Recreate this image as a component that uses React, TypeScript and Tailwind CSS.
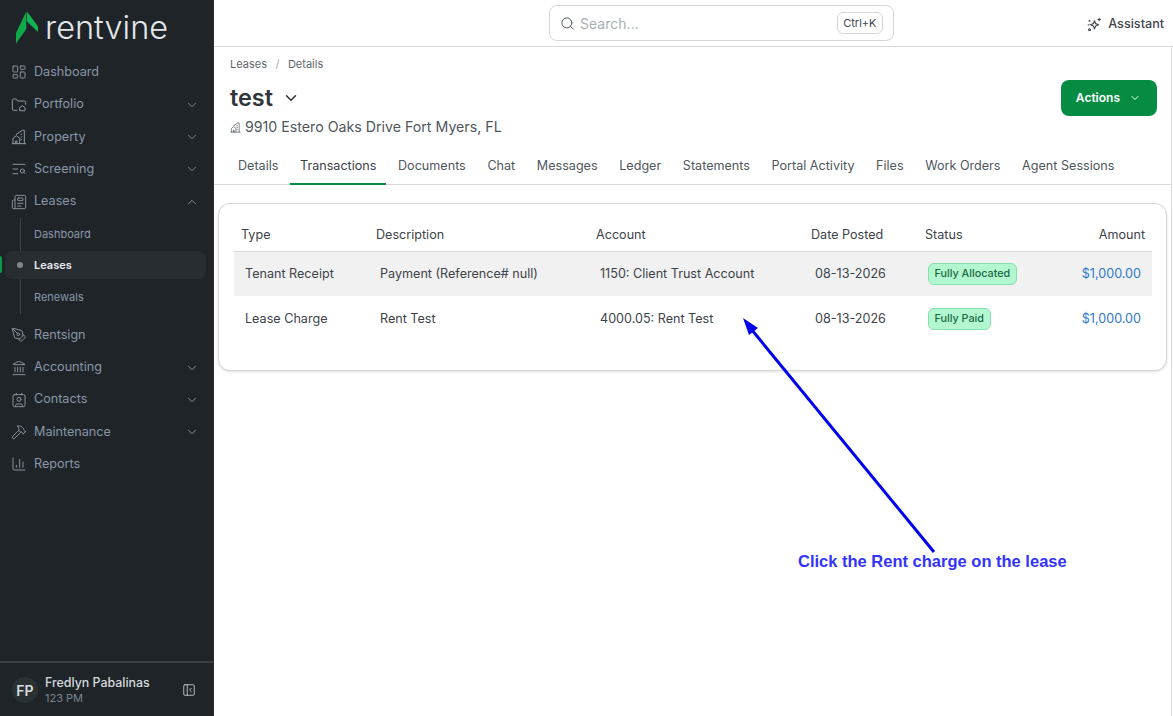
import React from "react";
import {
  ChartColumn,
  ChevronDown,
  ChevronUp,
  Contact,
  Hammer,
  Landmark,
  LayoutDashboard,
  Newspaper,
  PanelLeftClose,
  PenTool,
  Search,
  TextSearch,
} from "lucide-react";

const FolderHome = ({ className }: { className?: string }) => (
  <svg viewBox="0 0 24 24" fill="none" stroke="currentColor" strokeWidth="1.5" strokeLinecap="round" strokeLinejoin="round" className={className}>
    <path d="M9 20H4a2 2 0 0 1-2-2V5a2 2 0 0 1 2-2h4l2 3h10a2 2 0 0 1 2 2v3" />
    <path d="M13 20v-4l4-3 4 3v4z" />
  </svg>
);

const PropertyIcon = ({ className }: { className?: string }) => (
  <svg viewBox="0 0 24 24" fill="none" stroke="currentColor" strokeWidth="1.5" strokeLinecap="round" strokeLinejoin="round" className={className}>
    <path d="M2 22h20" />
    <path d="M3 22v-8l5-4 5 4v8" />
    <path d="M7 22v-4h2v4" />
    <path d="M8 8l9-6h3v20" />
    <path d="M15 8h1M15 12h1M15 16h1" />
  </svg>
);

const Sparkle = ({ className }: { className?: string }) => (
  <svg viewBox="0 0 24 24" fill="none" stroke="currentColor" strokeWidth="1.8" strokeLinecap="round" strokeLinejoin="round" className={className}>
    <path d="M12 6l1.8 4.6L18.5 12.5l-4.7 1.9L12 19l-1.8-4.6-4.7-1.9 4.7-1.9z" />
    <path d="M19.5 2v4M17.5 4h4" />
    <circle cx="4" cy="20.5" r="1.5" />
    <circle cx="4" cy="6" r="0.6" />
    <path d="M2 12.5h1" />
  </svg>
);

const navTop = [
  { label: "Dashboard", icon: LayoutDashboard },
  { label: "Portfolio", icon: FolderHome, more: true },
  { label: "Property", icon: PropertyIcon, more: true },
  { label: "Screening", icon: TextSearch, more: true },
];

const navBottom = [
  { label: "Rentsign", icon: PenTool },
  { label: "Accounting", icon: Landmark, more: true },
  { label: "Contacts", icon: Contact, more: true },
  { label: "Maintenance", icon: Hammer, more: true },
  { label: "Reports", icon: ChartColumn },
];

const tabs = ["Details", "Transactions", "Documents", "Chat", "Messages", "Ledger", "Statements", "Portal Activity", "Files", "Work Orders", "Agent Sessions"];

const rows = [
  { type: "Tenant Receipt", desc: "Payment (Reference# null)", account: "1150: Client Trust Account", status: "Fully Allocated", shade: "bg-[#f1f1f1]" },
  { type: "Lease Charge", desc: "Rent Test", account: "4000.05: Rent Test", status: "Fully Paid", shade: "pt-[2px]" },
];

const NavItem = ({ item }: { item: { label: string; icon: React.ElementType; more?: boolean } }) => {
  const Icon = item.icon;
  return (
    <div className="flex items-center h-[32.3px] pl-[11px] pr-[14px] text-[12.6px] text-[#8b96a6]">
      <Icon className="w-[16px] h-[16px] mr-[7px] shrink-0 text-[#8f98a3]" strokeWidth={1.4} />
      <span>{item.label}</span>
      {item.more && <ChevronDown className="w-[14px] h-[14px] ml-auto text-[#8f98a3]" strokeWidth={1.5} />}
    </div>
  );
};

const Sidebar = () => (
  <aside className="flex flex-col w-[214px] h-[716px] shrink-0 bg-[#1f2429] border-r border-[#2a2f34]">
    <div className="flex items-center h-[56.3px] pl-4">
      <svg viewBox="16 11 23 33" className="w-[23px] h-[33px] shrink-0 mt-[-1px]">
        <path d="M27 11.5 L38 26.5 L38 32 L27 21.5 Z" fill="#12b553" />
        <path d="M26.3 11.5 L26.3 29 L16 43.5 L16 33 Z" fill="#0ea94b" />
      </svg>
      <span className="ml-[6px] text-[32.5px] leading-none font-light text-[#e4e7ea]">rentvine</span>
    </div>
    <nav className="flex flex-col relative">
      {navTop.map((item) => (
        <NavItem key={item.label} item={item} />
      ))}
      <div className="flex items-center h-[32.3px] pl-[11px] pr-[14px] text-[12.6px] text-[#8b96a6]">
        <Newspaper className="w-[16px] h-[16px] mr-[7px] text-[#8f98a3]" strokeWidth={1.4} />
        <span>Leases</span>
        <ChevronUp className="w-[14px] h-[14px] ml-auto text-[#8f98a3]" strokeWidth={1.5} />
      </div>
      <div className="relative flex flex-col mb-[5.4px] text-[11px]">
        <div className="absolute left-[20px] top-0 bottom-0 w-px bg-[#3d4349]" />
        <div className="flex items-center h-[31.2px] pt-[2px] pl-[34px] text-[#8b96a6]">Dashboard</div>
        <div className="relative flex items-center h-[28.5px] my-[2px] ml-[5px] mr-[7px] pl-[29px] rounded-lg bg-[#282d32] font-semibold text-[#e8ebee]">
          <span className="absolute left-[-5px] top-[5px] w-[2px] h-[17px] rounded-r bg-[#0b9a45]" />
          <span className="absolute left-[12px] top-[11px] w-[6px] h-[6px] rounded-full bg-[#7e858d]" />
          Leases
        </div>
        <div className="flex items-center h-[32.3px] pl-[34px] text-[#8b96a6]">Renewals</div>
      </div>
      {navBottom.map((item) => (
        <NavItem key={item.label} item={item} />
      ))}
    </nav>
    <div className="flex items-center mt-auto h-[55px] pl-3 pr-[17px] pt-[1px] border-t-2 border-[#3a3f44]">
      <div className="flex items-center justify-center w-[26px] h-[26px] mr-[7px] rounded-full bg-[#2a3135] text-[14px] font-semibold text-[#d9dcdf]">FP</div>
      <div className="flex flex-col">
        <span className="text-[12.4px] leading-4 font-medium text-[#d5d8dc]">Fredlyn Pabalinas</span>
        <span className="text-[11px] leading-[15px] text-[#7c838b]">123 PM</span>
      </div>
      <PanelLeftClose className="w-[14px] h-[14px] ml-auto text-[#c9cdd1]" strokeWidth={1.5} />
    </div>
  </aside>
);

const Topbar = () => (
  <header className="relative flex items-center h-[47px] pl-[335px] border-b border-[#d9d9d9]">
    <div className="flex items-center w-[345px] h-[36px] pl-[10px] pr-[10px] rounded-lg border border-[#d4d6d8]">
      <Search className="w-[15px] h-[15px] mr-[5px] text-[#4b5258]" strokeWidth={1.5} />
      <span className="text-[14px] text-[#a9afb4]">Search...</span>
      <span className="ml-auto px-[5.5px] h-[22px] flex items-center rounded-md border border-[#d4d6d8] text-[11px] text-[#40464c]">Ctrl+K</span>
    </div>
    <div className="absolute right-[9px] top-[15px] flex items-center text-[12.6px] font-medium text-[#3f454b]">
      <Sparkle className="w-[15px] h-[15px] mr-[6px]" />
      Assistant
    </div>
  </header>
);

const Table = () => (
  <div className="ml-[4px] mr-[4px] mt-[18px] h-[168px] rounded-xl border border-[#d6d6d6] shadow-sm pl-[15px] pr-[14px] pt-[14px] bg-white">
    <div className="grid grid-cols-[135px_220px_215px_114px_1fr_auto] h-[34px] pt-[2px] items-center pl-[7px] pr-[7px] border-b border-[#dcdcdc] text-[12.6px] text-[#3d4349]">
      <span>Type</span>
      <span>Description</span>
      <span>Account</span>
      <span>Date Posted</span>
      <span>Status</span>
      <span>Amount</span>
    </div>
    {rows.map((row) => (
      <div key={row.type} className={`grid grid-cols-[135px_220px_215px_113px_1fr_auto] h-[44px] items-center pl-[11px] pr-[11px] text-[12.6px] text-[#3d4349] ${row.shade}`}>
        <span>{row.type}</span>
        <span>{row.desc}</span>
        <span>{row.account}</span>
        <span>08-13-2026</span>
        <span className="justify-self-start px-[5.5px] h-[22px] flex items-center rounded-md border border-[#86dfae] bg-[#b2f7d0] text-[10.8px] font-medium text-[#1c6b45]">{row.status}</span>
        <span className="text-[#2b78c9]">$1,000.00</span>
      </div>
    ))}
  </div>
);

const Main = () => (
  <main className="relative flex-1 min-w-0 h-[716px] bg-white">
    <Topbar />
    <div className="h-[669px] mr-[1px] border-r border-[#d9d9d9]">
      <section className="pl-[16px] pt-[10px] pr-[14px] flex items-start justify-between">
        <div>
          <div className="flex items-center h-[14px] text-[11px] text-[#5f666d]">
            <span>Leases</span>
            <span className="mx-[8.5px] text-[#a5a9ad]">/</span>
            <span>Details</span>
          </div>
          <div className="flex items-center h-[28px] mt-[13px] text-[23.4px] leading-none font-semibold text-[#2f353a]">
            test
            <ChevronDown className="w-[18px] h-[18px] ml-[9px]" strokeWidth={2} />
          </div>
          <div className="flex items-center h-[20px] mt-[5px] text-[14.2px] text-[#4f565c]">
            <PropertyIcon className="w-[11px] h-[11px] mr-[4px]" />
            9910 Estero Oaks Drive Fort Myers, FL
          </div>
        </div>
        <button className="flex items-center h-[36px] mt-[23px] pl-[15px] pr-[16px] rounded-lg bg-[#058c42] text-[12px] font-semibold text-white">
          Actions
          <ChevronDown className="w-[12px] h-[12px] ml-[9px]" />
        </button>
      </section>
      <div className="flex h-[36px] mt-[12px] pl-[14px] border-b border-[#d9d9d9] text-[12.6px] text-[#50575d]">
        {tabs.map((tab) => (
          <div key={tab} className={`flex items-center px-[10px] mr-[1.6px] -mb-px border-b-2 ${tab === "Transactions" ? "border-[#058c42] text-[#3c4248]" : "border-transparent"}`}>
            {tab}
          </div>
        ))}
      </div>
      <Table />
    </div>
    {/* annotation drawn on the screenshot */}
    <svg className="absolute left-0 top-0 w-full h-full pointer-events-none">
      <line x1="720" y1="552" x2="533" y2="324" stroke="#0000ee" strokeWidth="3" />
      <path d="M529 318 L544 328 L535 335 Z" fill="#0000ee" />
    </svg>
    <span className="absolute left-[584px] top-[549px] text-[16.5px] font-bold text-[#3333ff] font-['Liberation_Sans',sans-serif]">Click the Rent charge on the lease</span>
  </main>
);

export default function App() {
  return (
    <div className="flex w-[1173px] h-[716px] overflow-hidden font-['Inter',sans-serif]">
      <Sidebar />
      <Main />
    </div>
  );
}
